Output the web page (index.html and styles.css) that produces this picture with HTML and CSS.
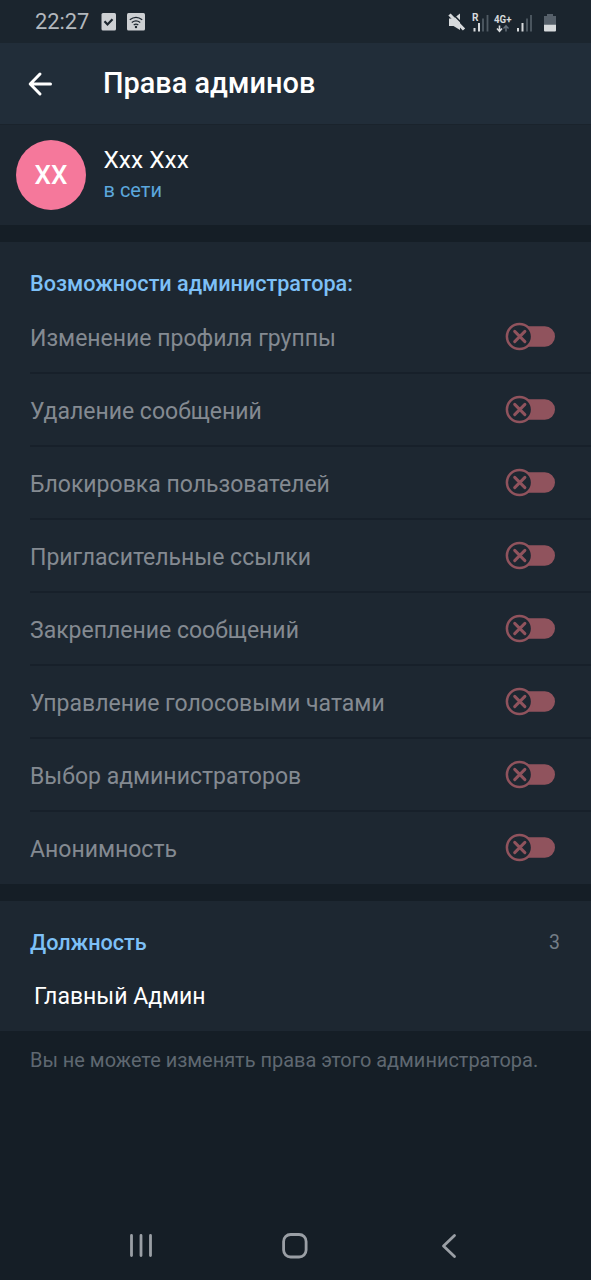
FILE: index.html
```html
<!DOCTYPE html>
<html lang="ru">
<head>
<meta charset="utf-8">
<title>Права админов</title>
<link rel="stylesheet" href="styles.css">
</head>
<body>
<svg class="defs" width="0" height="0" aria-hidden="true">
  <symbol id="locked" viewBox="0 0 50 30">
    <path class="track" d="M14.500 4.300h25.300a10.200 10.200 0 0 1 0 20.400H14.500z"/>
    <circle class="knob" cx="14.500" cy="14.500" r="12.600"/>
    <path class="cross" d="M9.700 9.400l10.200 10.200M19.900 9.400L9.700 19.600"/>
  </symbol>
</svg>
<div class="screen">
  <div class="status">
    <span class="time">22:27</span>
    <svg class="notes" width="48" height="22" viewBox="0 0 48 22">
      <rect x="1.500" y="2" width="14.500" height="17.500" rx="1.500" fill="#cdd0d3"/>
      <path d="M4.500 10.300l3 3.200 5-5.200" fill="none" stroke="#1b252e" stroke-width="2.200"/>
      <rect x="27" y="2" width="18" height="17.500" rx="1.500" fill="#cdd0d3"/>
      <path d="M29.800 8.800q6.200-4.800 12.400 0M31.800 11.500q4.200-3.100 8.400 0M33.700 14q2.300-1.600 4.600 0" fill="none" stroke="#1b252e" stroke-width="1.300"/>
      <circle cx="36" cy="16" r="1.200" fill="#1b252e"/>
    </svg>
    <svg class="signals" width="116" height="26" viewBox="446 8 116 26">
      <path d="M449 17.500h4.500L460 12.500v16.500l-6.500-4H449z" fill="#d7dadc"/>
      <path d="M451.500 11.700l15 15" stroke="#1b252e" stroke-width="1.600"/>
      <path d="M449.500 13.500l14.500 15" stroke="#d7dadc" stroke-width="3.200"/>
      <text class="tiny" x="472" y="20" textLength="6.500" lengthAdjust="spacingAndGlyphs">R</text>
      <path d="M474.500 27v3.500M479 22v8.500" stroke="#d7dadc" stroke-width="2"/>
      <path d="M483 17.500v13M487.500 14v16.500" stroke="#505b64" stroke-width="1.800"/>
      <text class="tiny" x="494" y="21.800" textLength="17.500" lengthAdjust="spacingAndGlyphs">4G+</text>
      <path d="M499.500 24.500v5.500M497 27.500l2.500 2.700 2.500-2.700" fill="none" stroke="#d7dadc" stroke-width="1.600"/>
      <path d="M506 30.500V25M503.500 27.500l2.500-2.700 2.500 2.700" fill="none" stroke="#66717a" stroke-width="1.400"/>
      <path d="M518 27v3.500M522.500 22v8.500" stroke="#d7dadc" stroke-width="2"/>
      <path d="M527 17.500v13M531 14v16.500" stroke="#505b64" stroke-width="1.800"/>
      <path d="M544 15h3v-2h6v2h3v9h-12z" fill="#56606a"/>
      <path d="M544 23.800h12v5.700a1 1 0 0 1-1 1h-10a1 1 0 0 1-1-1z" fill="#d7dadc"/>
    </svg>
  </div>
  <header class="bar">
    <svg class="back" width="28" height="28" viewBox="0 0 28 28"><path d="M23.500 14H3.500M13 4L3.200 14l9.800 10"/></svg>
    <h1 class="title">Права админов</h1>
  </header>
  <section class="user">
    <div class="avatar">XX</div>
    <div class="who">
      <div class="name">Ххх Ххх</div>
      <div class="online">в сети</div>
    </div>
  </section>
  <section class="rights">
    <h2 class="heading">Возможности администратора:</h2>
    <div class="row"><span>Изменение профиля группы</span><svg class="toggle"><use href="#locked"/></svg></div>
    <div class="row"><span>Удаление сообщений</span><svg class="toggle"><use href="#locked"/></svg></div>
    <div class="row"><span>Блокировка пользователей</span><svg class="toggle"><use href="#locked"/></svg></div>
    <div class="row"><span>Пригласительные ссылки</span><svg class="toggle"><use href="#locked"/></svg></div>
    <div class="row"><span>Закрепление сообщений</span><svg class="toggle"><use href="#locked"/></svg></div>
    <div class="row"><span>Управление голосовыми чатами</span><svg class="toggle"><use href="#locked"/></svg></div>
    <div class="row"><span>Выбор администраторов</span><svg class="toggle"><use href="#locked"/></svg></div>
    <div class="row"><span>Анонимность</span><svg class="toggle"><use href="#locked"/></svg></div>
  </section>
  <section class="rank">
    <div class="rank-head"><h2 class="heading">Должность</h2><span class="count">3</span></div>
    <div class="rank-value">Главный Админ</div>
  </section>
  <p class="info">Вы не можете изменять права этого администратора.</p>
  <nav class="nav">
    <svg width="28" height="28" viewBox="0 0 28 28"><path d="M4.500 3.500v20M14 3.500v20M23.500 3.500v20"/></svg>
    <svg width="28" height="28" viewBox="0 0 28 28"><rect x="2.600" y="2.500" width="22.500" height="22.500" rx="7"/></svg>
    <svg width="28" height="28" viewBox="0 0 28 28"><path d="M19.500 3.500L8.500 14 19.500 24.500"/></svg>
  </nav>
</div>
</body>
</html>
```
FILE: styles.css
```css
* { box-sizing: border-box; }
body { margin: 0; background: #151e26; font-family: Roboto, "Noto Sans", sans-serif; }
h1, h2, p { margin: 0; }
.defs { display: block; }
.screen { display: flex; flex-direction: column; height: 1280px; }
.status { display: flex; align-items: center; height: 43px; padding: 0 29px 0 35px; background: #1b252e; }
.time { width: 65px; padding-top: 1px; font-size: 21.800px; line-height: 42px; color: #b3b8bd; }
.notes { margin-right: auto; }
.tiny { font: 700 11px Roboto, sans-serif; fill: #d7dadc; }
.bar { display: flex; align-items: center; height: 81px; padding-left: 27px; background: #212d39; }
.back { margin-right: 48px; fill: none; stroke: #fff; stroke-width: 3; stroke-linecap: round; stroke-linejoin: round; }
.title { padding-bottom: 2px; font-size: 28.900px; font-weight: 500; line-height: 34px; color: #fff; }
.user { display: flex; align-items: center; height: 101px; padding-left: 16px; background: #1d2731; border-top: 1px solid #1a232c; }
.avatar { width: 70px; height: 70px; margin-right: 17.500px; border-radius: 50%; background: #f5789b; color: #fff; font-size: 26px; font-weight: 500; line-height: 70px; text-align: center; }
.name { font-size: 24.500px; line-height: 30px; color: #fff; }
.online { font-size: 20px; line-height: 30px; color: #5ca7dd; }
.rights { height: 642px; margin-top: 17px; padding-top: 26px; background: #1d2731; }
.heading { font-size: 21.600px; font-weight: 500; line-height: 32px; color: #7dc0f7; }
.rights .heading { height: 33px; padding-left: 30px; line-height: 31px; }
.row { display: flex; align-items: center; justify-content: space-between; height: 73px; margin-left: 30px; padding-right: 36px; border-bottom: 2px solid #17202a; color: #848a91; font-size: 23px; }
.row span { padding-top: 3px; }
.row:last-child { border-bottom-color: transparent; }
.toggle { width: 50px; height: 30px; }
.track { fill: #90535d; }
.knob { fill: #1d2731; stroke: #90535d; stroke-width: 2.500; }
.cross { stroke: #90535d; stroke-width: 3; stroke-linecap: round; }
.rank { height: 130px; margin-top: 17px; padding: 25px 31px 0 30px; background: #1d2731; }
.rank-head { display: flex; justify-content: space-between; line-height: 33px; }
.rank-head .heading { line-height: 33px; }
.count { font-size: 19.500px; color: #747d87; }
.rank-value { padding: 20px 0 0 4px; font-size: 23px; line-height: 36px; color: #fff; }
.info { padding: 14px 0 0 30px; font-size: 19.950px; line-height: 31px; color: #5f6871; }
.nav { display: flex; justify-content: space-between; margin-top: auto; padding: 0 128px 20px 127px; }
.nav svg { fill: none; stroke: #9a9fa5; stroke-width: 2.800; stroke-linecap: round; stroke-linejoin: round; }
```
